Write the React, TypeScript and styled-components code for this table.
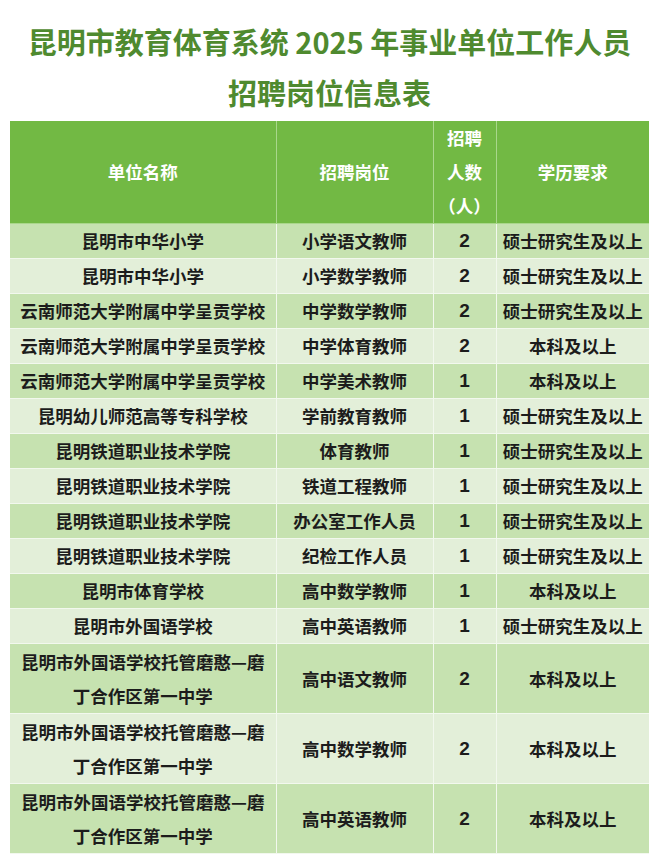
import React from "react";
import styled, { createGlobalStyle } from "styled-components";

const Global = createGlobalStyle`
  html, body { margin: 0; padding: 0; background: #ffffff; }
  body { font-family: "Noto Sans CJK SC", "Noto Sans", sans-serif; }
`;

const Page = styled.div`
  width: 660px;
  padding: 16px 11px 0 10px;
  box-sizing: border-box;
`;

const Title = styled.h1`
  margin: 0 0 3px;
  text-align: center;
  font-size: 29px;
  line-height: 51px;
  font-weight: 700;
  color: #4f8a2f;
  letter-spacing: 0;
`;

const Table = styled.table`
  width: 639px;
  border-collapse: collapse;
  table-layout: fixed;
`;

const HeadCell = styled.th`
  background: #72b944;
  color: #ffffff;
  font-size: 17.5px;
  font-weight: 700;
  line-height: 34px;
  height: 102px;
  padding: 0;
  text-align: center;
  vertical-align: middle;
  border: 1px solid #a9d78b;
  border-top: none;
  &:first-child { border-left: none; }
  &:last-child { border-right: none; }
`;

const Row = styled.tr<{ $dark: boolean; $tall?: boolean }>`
  background: ${(p) => (p.$dark ? "#c6e2b0" : "#e3efd9")};
`;

const Cell = styled.td<{ $tall?: boolean }>`
  padding: 0;
  height: ${(p) => (p.$tall ? "69px" : "34px")};
  text-align: center;
  vertical-align: middle;
  font-size: 17.5px;
  font-weight: 700;
  line-height: 34px;
  color: #1c1c1c;
  white-space: pre-line;
  border: 1px solid #f2f8ee;
  &:first-child { border-left: none; }
  &:last-child { border-right: none; }
`;

const NumCell = styled(Cell)`
  font-family: "Liberation Sans", "Noto Sans CJK SC", sans-serif;
  font-size: 19px;
  font-weight: 700;
`;

type Item = { unit: string; post: string; n: number; edu: string };

const MASTER = "硕士研究生及以上";
const BACH = "本科及以上";
const FOREIGN = "昆明市外国语学校托管磨憨—磨\n丁合作区第一中学";
const YN = "云南师范大学附属中学呈贡学校";
const RAIL = "昆明铁道职业技术学院";

const rows: Item[] = [
  { unit: "昆明市中华小学", post: "小学语文教师", n: 2, edu: MASTER },
  { unit: "昆明市中华小学", post: "小学数学教师", n: 2, edu: MASTER },
  { unit: YN, post: "中学数学教师", n: 2, edu: MASTER },
  { unit: YN, post: "中学体育教师", n: 2, edu: BACH },
  { unit: YN, post: "中学美术教师", n: 1, edu: BACH },
  { unit: "昆明幼儿师范高等专科学校", post: "学前教育教师", n: 1, edu: MASTER },
  { unit: RAIL, post: "体育教师", n: 1, edu: MASTER },
  { unit: RAIL, post: "铁道工程教师", n: 1, edu: MASTER },
  { unit: RAIL, post: "办公室工作人员", n: 1, edu: MASTER },
  { unit: RAIL, post: "纪检工作人员", n: 1, edu: MASTER },
  { unit: "昆明市体育学校", post: "高中数学教师", n: 1, edu: BACH },
  { unit: "昆明市外国语学校", post: "高中英语教师", n: 1, edu: MASTER },
  { unit: FOREIGN, post: "高中语文教师", n: 2, edu: BACH },
  { unit: FOREIGN, post: "高中数学教师", n: 2, edu: BACH },
  { unit: FOREIGN, post: "高中英语教师", n: 2, edu: BACH },
];

export default function App() {
  return (
    <Page>
      <Global />
      <Title>
        昆明市教育体育系统 2025 年事业单位工作人员
        <br />
        招聘岗位信息表
      </Title>
      <Table>
        <colgroup>
          <col style={{ width: 266 }} />
          <col style={{ width: 157 }} />
          <col style={{ width: 63 }} />
          <col style={{ width: 153 }} />
        </colgroup>
        <thead>
          <tr>
            <HeadCell>单位名称</HeadCell>
            <HeadCell>招聘岗位</HeadCell>
            <HeadCell>
              招聘
              <br />
              人数
              <br />
              （人）
            </HeadCell>
            <HeadCell>学历要求</HeadCell>
          </tr>
        </thead>
        <tbody>
          {rows.map((r, i) => {
            const tall = r.unit.includes("\n");
            return (
              <Row key={i} $dark={i % 2 === 0}>
                <Cell $tall={tall}>{r.unit}</Cell>
                <Cell $tall={tall}>{r.post}</Cell>
                <NumCell $tall={tall}>{r.n}</NumCell>
                <Cell $tall={tall}>{r.edu}</Cell>
              </Row>
            );
          })}
        </tbody>
      </Table>
    </Page>
  );
}
